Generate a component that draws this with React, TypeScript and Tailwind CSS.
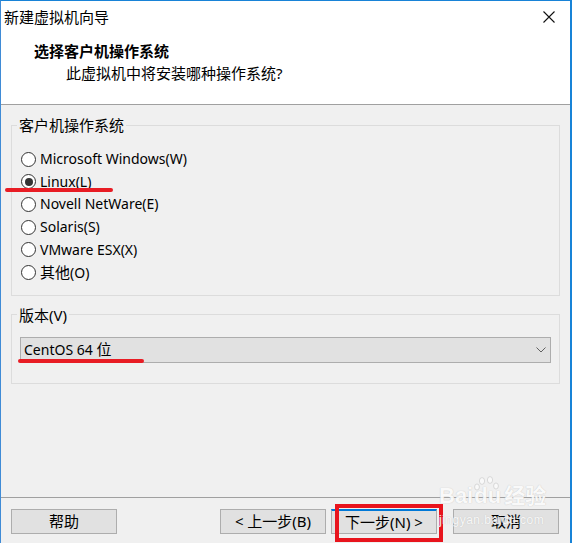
const font = "font-['Noto_Sans','Noto_Sans_CJK_SC',sans-serif]"

const osList = [
    { label: "Microsoft Windows(W)", checked: false },
    { label: "Linux(L)", checked: true },
    { label: "Novell NetWare(E)", checked: false },
    { label: "Solaris(S)", checked: false },
    { label: "VMware ESX(X)", checked: false },
    { label: "其他(O)", checked: false },
]

// CJK glyphs a touch larger than the latin ones, like the Windows UI font mix
function Mixed({ text }: { text: string }) {
    const parts = text.split(/([\u4e00-\u9fff]+)/).filter(Boolean)
    return (
        <>
            {parts.map((p, i) =>
                /[\u4e00-\u9fff]/.test(p)
                    ? <span key={i} className="text-[15px]">{p}</span>
                    : <span key={i}>{p}</span>
            )}
        </>
    )
}

function Radio({ checked }: { checked: boolean }) {
    return (
        <span className="w-[15px] h-[15px] rounded-full border border-[#333333] bg-white flex items-center justify-center shrink-0">
            {checked && <span className="w-[8px] h-[8px] rounded-full bg-[#333333]" />}
        </span>
    )
}

function Button({ children, className }: { children: React.ReactNode, className?: string }) {
    return (
        <div className={`h-[25px] w-[106px] bg-[#e1e1e1] border border-[#adadad] flex items-center justify-center text-[15px] text-black ${className ?? ""}`}>
            {children}
        </div>
    )
}

export default function App() {
    return (
        <div className={`relative w-[572px] h-[543px] overflow-hidden bg-[#f0f0f0] border-t border-t-[#1883d7] border-l border-l-[#3f8bd6] border-r-2 border-r-[#1883d7] flex flex-col ${font}`}>
            {/* header */}
            <div className="bg-white h-[104px] border-b border-b-[#a0a0a0] flex flex-col shrink-0">
                <div className="h-[32px] flex items-center justify-between pl-[3px] pr-[15px]">
                    <span className="text-[15px] text-black leading-[20px]">新建虚拟机向导</span>
                    <svg width="12" height="12" viewBox="0 0 12 12">
                        <path d="M0.5 0.5 L11.5 11.5 M11.5 0.5 L0.5 11.5" stroke="#111" strokeWidth="1.1" />
                    </svg>
                </div>
                <h1 className="mt-[8px] pl-[33px] text-[15px] leading-[20px] font-bold text-black">选择客户机操作系统</h1>
                <p className="mt-[2px] pl-[65px] text-[15px] leading-[20px] text-black">此虚拟机中将安装哪种操作系统?</p>
            </div>

            {/* body */}
            <div className="flex flex-col px-[10px] pt-[10px] shrink-0">
                <fieldset className="border border-[#dcdcdc] px-0 pb-[11px]">
                    <legend className="ml-[5px] px-[2px] text-[15px] leading-[20px] text-black">客户机操作系统</legend>
                    <div className="flex flex-col pl-[9px] pt-[13px]">
                        {osList.map((os) => (
                            <div key={os.label} className="h-[22.6px] flex items-center gap-[4px]">
                                <Radio checked={os.checked} />
                                <span className="text-[14px] leading-[20px] text-black"><Mixed text={os.label} /></span>
                            </div>
                        ))}
                    </div>
                </fieldset>

                <fieldset className="mt-[9px] border border-[#dcdcdc] px-[8px] pb-[20px]">
                    <legend className="ml-[-3px] px-[2px] text-[15px] leading-[20px] text-black">版本(V)</legend>
                    <div className="mt-[12px] h-[26px] bg-[#e1e1e1] border border-[#adadad] flex items-center justify-between pl-[3px] pr-[4px]">
                        <span className="text-[14px] leading-[20px] text-black"><Mixed text="CentOS 64 位" /></span>
                        <svg width="10" height="6" viewBox="0 0 10 6">
                            <path d="M0.5 0.5 L5 5 L9.5 0.5" fill="none" stroke="#606060" strokeWidth="1" />
                        </svg>
                    </div>
                </fieldset>
            </div>

            <div className="flex-1" />

            {/* footer */}
            <div className="border-t border-t-[#a0a0a0] h-[46px] pt-[11px] flex items-start px-[10px] shrink-0">
                <Button>帮助</Button>
                <div className="flex-1" />
                <Button>&lt; 上一步(B)</Button>
                <Button className="ml-[5px] border-t-2 border-t-[#0078d7]">下一步(N) &gt;</Button>
                <Button className="ml-[16px] mr-[1px]">取消</Button>
            </div>

            {/* annotations */}
            <div className="absolute left-[4px] top-[187px] w-[108px] h-[4px] rounded-full bg-[#e81c24]" />
            <div className="absolute left-[17px] top-[358px] w-[126px] h-[4px] rounded-full bg-[#e81c24]" />
            <div className="absolute left-[334px] top-[503px] w-[108px] h-[38px] border-[4px] border-[#e8141d]" />

            {/* watermark */}
            <div className="absolute left-[438px] top-[482px] flex flex-col items-start text-[#fbfbfb] [text-shadow:0_0_1px_#b8b8b8] opacity-90">
                <div className="flex items-end font-['Liberation_Sans','Noto_Sans_CJK_SC',sans-serif] font-bold text-[22px] leading-[26px]">
                    <span>Bai</span>
                    <span className="relative w-[28px] h-[26px]">
                        <svg width="28" height="26" viewBox="0 0 28 26" className="absolute left-0 top-[-8px]">
                            <g fill="#fbfbfb" stroke="#c0c0c0" strokeWidth="0.6">
                                <ellipse cx="9" cy="6" rx="2.6" ry="3.4" />
                                <ellipse cx="17" cy="5" rx="2.6" ry="3.4" />
                                <ellipse cx="4" cy="12" rx="2.4" ry="3" />
                                <ellipse cx="23" cy="11" rx="2.4" ry="3" />
                            </g>
                        </svg>
                        <span className="absolute left-[1px] bottom-0">du</span>
                    </span>
                    <span className="ml-[3px] text-[21px]">经验</span>
                </div>
                <span className="font-['Liberation_Sans',sans-serif] text-[12px] leading-[14px] mt-[4px] tracking-[0.5px]">jingyan.baidu.com</span>
            </div>
        </div>
    )
}
